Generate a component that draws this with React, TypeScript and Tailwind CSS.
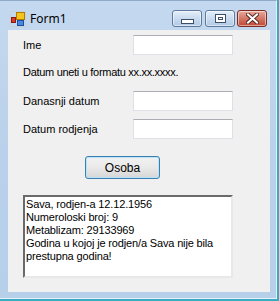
const lines = [
    'Sava, rodjen-a 12.12.1956',
    'Numeroloski broj: 9',
    'Metablizam: 29133969',
    'Godina u kojoj je rodjen/a Sava nije bila prestupna godina!',
];

function TextBox() {
    return (
        <div className="w-[100px] h-[20px] bg-white border border-[#dde1e7] border-t-[#abadb3] ml-auto mr-[37px]" />
    );
}

function AppIcon() {
    return (
        <svg width="16" height="16" viewBox="0 0 16 16">
            <rect x="0.5" y="0.5" width="15" height="15" fill="none" stroke="#c8c8c8" strokeDasharray="1 1" />
            <rect x="1.5" y="6.5" width="4" height="5" fill="#d83a2a" stroke="#8a1a10" />
            <rect x="6.5" y="1.5" width="8" height="7" fill="#f6c21c" stroke="#b07d00" />
            <rect x="7.5" y="9.5" width="6" height="5" fill="#4a88e0" stroke="#1d4fa0" />
        </svg>
    );
}

function CaptionButton({ kind }: { kind: 'min' | 'max' | 'close' }) {
    const base = 'w-[30px] h-[17px] rounded-[3px] border flex items-center justify-center shadow-[inset_0_0_0_1px_rgba(255,255,255,0.5)]';
    if (kind === 'close') {
        return (
            <div className={`${base} border-[#7a2a22] bg-gradient-to-b from-[#e9a99b] via-[#d47767] to-[#c0452f]`}>
                <svg width="13" height="11" viewBox="0 0 13 11">
                    <path d="M2 1.5 L11 9.5 M11 1.5 L2 9.5" stroke="#5a2a24" strokeWidth="4" strokeLinecap="square" />
                    <path d="M2 1.5 L11 9.5 M11 1.5 L2 9.5" stroke="#ffffff" strokeWidth="2" strokeLinecap="square" />
                </svg>
            </div>
        );
    }
    return (
        <div className={`${base} border-[#5d7a9c] bg-gradient-to-b from-[#e4eef9] via-[#c9dbef] to-[#b1c9e5]`}>
            {kind === 'min' ? (
                <div className="w-[13px] h-[5px] mt-[6px] bg-white border border-[#3d4e66]" />
            ) : (
                <div className="w-[11px] h-[9px] bg-white border border-[#3d4e66] flex items-center justify-center">
                    <div className="w-[5px] h-[3px] border border-[#3d4e66]" />
                </div>
            )}
        </div>
    );
}

export default function App() {
    return (
        <div className="w-[279px] h-[301px] bg-[#3aaac3]" style={{ fontFamily: '"Liberation Sans", Arial, sans-serif' }}>
            <div className="w-[277px] h-[299px] flex flex-col bg-gradient-to-b from-[#c4d9ef] via-[#b9d1ea] to-[#b7d0ea] border-t border-[#8fa9c6] border-r border-b border-r-[#e6eef8] border-b-[#e6eef8]">
                <div className="h-[29px] flex items-start pl-[10px] pr-[9px]">
                    <div className="mt-[10px]"><AppIcon /></div>
                    <span className="ml-[4px] mt-[9px] text-[12px] text-black" style={{ fontFamily: '"Noto Sans", "Open Sans", sans-serif' }}>Form1</span>
                    <div className="ml-auto mt-[9px] flex gap-[3px]">
                        <CaptionButton kind="min" />
                        <div className="mr-[-1px]"><CaptionButton kind="max" /></div>
                        <CaptionButton kind="close" />
                    </div>
                </div>
                <div className="ml-[8px] w-[262px] h-[262px] bg-[#f0f0f0] flex flex-col pl-[15px] text-[11px] text-black">
                    <div className="mt-[5px] h-[20px] flex items-center">
                        <span>Ime</span>
                        <TextBox />
                    </div>
                    <div className="mt-[7px] h-[20px] flex items-center tracking-[-0.3px]">Datum uneti u formatu xx.xx.xxxx.</div>
                    <div className="mt-[9px] h-[20px] flex items-center">
                        <span>Danasnji datum</span>
                        <TextBox />
                    </div>
                    <div className="mt-[8px] h-[20px] flex items-center">
                        <span>Datum rodjenja</span>
                        <TextBox />
                    </div>
                    <div className="mt-[17px] ml-[62px] w-[75px] h-[23px] rounded-[3px] border border-[#3c7fb1] bg-gradient-to-b from-[#f2f2f2] via-[#e9e9e9] to-[#d6d6d6] shadow-[inset_0_0_0_1px_#b9e3f7] flex items-center justify-center text-[12px]">
                        Osoba
                    </div>
                    <div className="mt-[16px] w-[210px] h-[83px] bg-white border-2 border-t-[#6a6a6a] border-l-[#6a6a6a] border-r-[#e8e8e8] border-b-[#e8e8e8] px-[1px] pt-[1px] leading-[13px] tracking-[-0.15px]">
                        {lines.map((l) => (
                            <div key={l}>{l}</div>
                        ))}
                    </div>
                </div>
            </div>
        </div>
    );
}
